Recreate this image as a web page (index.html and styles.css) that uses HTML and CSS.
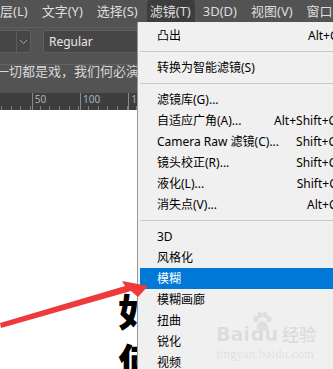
FILE: index.html
```html
<!DOCTYPE html>
<html lang="zh-CN">

<head>
  <meta charset="UTF-8">
  <title>滤镜菜单</title>
  <link rel="stylesheet" href="styles.css">
</head>

<body>
  <div class="app">
    <div class="menubar">
      <span class="menubar-item first">层(L)</span>
      <span class="menubar-item">文字(Y)</span>
      <span class="menubar-item">选择(S)</span>
      <span class="menubar-item active">滤镜(T)</span>
      <span class="menubar-item">3D(D)</span>
      <span class="menubar-item">视图(V)</span>
      <span class="menubar-item">窗口(W)</span>
    </div>

    <div class="options-bar">
      <div class="field font-family">
        <span class="field-value"></span>
        <span class="field-arrow">
          <svg width="9" height="6" viewBox="0 0 9 6"><path d="M1 1l3.5 3.5L8 1" fill="none" stroke="#a8a8a8" stroke-width="1"/></svg>
        </span>
      </div>
      <div class="field font-style">Regular</div>
    </div>

    <div class="doc-tab">一切都是戏，我们何必演</div>

    <div class="ruler">
      <span class="ruler-seg"></span>
      <span class="ruler-seg">50</span>
      <span class="ruler-seg">100</span>
      <span class="ruler-seg">150</span>
    </div>

    <div class="canvas">
      <div class="canvas-text">如<br>何</div>
    </div>
  </div>

  <!-- dropdown for 滤镜 -->
  <div class="dropdown">
    <div class="dd-item"><span>凸出</span><span class="key">Alt+Ctrl+F</span></div>
    <div class="dd-sep"></div>
    <div class="dd-item"><span>转换为智能滤镜(S)</span></div>
    <div class="dd-sep"></div>
    <div class="dd-item"><span>滤镜库(G)...</span></div>
    <div class="dd-item"><span>自适应广角(A)...</span><span class="key">Alt+Shift+Ctrl+A</span></div>
    <div class="dd-item"><span>Camera Raw 滤镜(C)...</span><span class="key">Shift+Ctrl+A</span></div>
    <div class="dd-item"><span>镜头校正(R)...</span><span class="key">Shift+Ctrl+R</span></div>
    <div class="dd-item"><span>液化(L)...</span><span class="key">Shift+Ctrl+X</span></div>
    <div class="dd-item"><span>消失点(V)...</span><span class="key">Alt+Ctrl+V</span></div>
    <div class="dd-sep"></div>
    <div class="dd-item"><span>3D</span></div>
    <div class="dd-item"><span>风格化</span></div>
    <div class="dd-item selected"><span>模糊</span></div>
    <div class="dd-item"><span>模糊画廊</span></div>
    <div class="dd-item"><span>扭曲</span></div>
    <div class="dd-item"><span>锐化</span></div>
    <div class="dd-item"><span>视频</span></div>

    <div class="watermark">
      <div class="wm-logo">
        <span>Bai</span>
        <svg class="wm-paw" width="22" height="20" viewBox="0 0 22 20">
          <ellipse cx="5" cy="7" rx="2.6" ry="3.2" fill="#dedede"/>
          <ellipse cx="9" cy="3" rx="2.4" ry="3" fill="#dedede"/>
          <ellipse cx="14" cy="3" rx="2.4" ry="3" fill="#dedede"/>
          <ellipse cx="18" cy="7" rx="2.6" ry="3.2" fill="#dedede"/>
          <path d="M11.5 9c-3 0-6 4-6 7 0 2 2 3 3.5 3h5c1.5 0 3.5-1 3.5-3 0-3-3-7-6-7z" fill="#dedede"/>
        </svg>
        <span class="wm-du">du</span>
        <span class="wm-cn">经验</span>
      </div>
      <div class="wm-url">jingyan.baidu.com</div>
    </div>
  </div>

  <svg class="arrow" width="333" height="369" viewBox="0 0 333 369">
    <polygon points="0,323 125,286 122,281 148,286 138,297 131,291 1,328" fill="#ee3a3a"/>
  </svg>
</body>

</html>
```

FILE: styles.css
```css
body {
  margin: 0;
  width: 333px;
  height: 369px;
  overflow: hidden;
  position: relative;
  background: #535353;
  font-family: "Noto Sans", "Noto Sans CJK SC", sans-serif;
}

.app {
  display: flex;
  flex-direction: column;
  height: 369px;
}

.app > div {
  flex: none;
}

/* top menu bar */
.menubar {
  display: flex;
  align-items: flex-start;
  height: 27px;
  background: #535353;
  color: #dedede;
  font-size: 13px;
}

.menubar-item {
  height: 22px;
  line-height: 22px;
  padding: 0 7px;
  white-space: nowrap;
}

.menubar-item.first {
  padding-left: 0;
  margin-left: 0;
}

.menubar-item.active {
  background: #3d3d3d;
  border-radius: 3px 3px 0 0;
  padding: 0 4px 0 3px;
  margin: 0 1px 0 2px;
}

/* options bar */
.options-bar {
  height: 34px;
  border-top: 1px solid #5f5f5f;
  display: flex;
  align-items: flex-start;
  padding-top: 2px;
  gap: 10px;
}

.field {
  height: 21px;
  background: #464646;
  border: 1px solid #606060;
  border-radius: 3px;
  color: #e8e8e8;
  font-size: 12px;
  line-height: 21px;
}

.font-family {
  width: 31px;
  margin-left: -2px;
  display: flex;
}

.field-value {
  width: 17px;
  border-right: 1px solid #5c5c5c;
}

.field-arrow {
  flex: 1;
  display: flex;
  align-items: center;
  justify-content: center;
}

.font-style {
  width: 140px;
  padding-left: 5px;
  margin-left: 2px;
}

/* document tab */
.doc-tab {
  height: 19px;
  line-height: 12px;
  border-top: 1px solid #636363;
  background: #535353;
  color: #d8d8d8;
  font-size: 13px;
  white-space: nowrap;
  margin-left: -4px;
  font-family: "Noto Sans CJK SC", sans-serif;
}

/* ruler */
.ruler {
  margin-top: 9px;
  height: 17px;
  background: #3e3e3e;
  background-image: repeating-linear-gradient(90deg, #7a7a7a 0, #7a7a7a 1px, transparent 1px, transparent 9.66px);
  background-size: 100% 4px;
  background-repeat: no-repeat;
  background-position: 1.4px bottom;
  display: flex;
  white-space: nowrap;
}

.ruler-seg {
  flex: none;
  width: 48.3px;
  box-sizing: border-box;
  border-left: 1px solid #8a8a8a;
  color: #a8b0b8;
  font-size: 10px;
  line-height: 13px;
  padding-left: 2px;
}

.ruler-seg:first-child {
  width: 31.7px;
  border-left: none;
}

/* canvas */
.app > .canvas {
  flex: 1;
  min-height: 0;
  overflow: hidden;
  background: #ffffff;
}

.canvas-text {
  padding: 175px 0 0 118px;
  font-family: "Noto Sans CJK SC", sans-serif;
  font-weight: 900;
  font-size: 38px;
  line-height: 50px;
  color: #000;
}

/* dropdown menu */
.dropdown {
  position: absolute;
  left: 137px;
  top: 22px;
  width: 245px;
  height: 360px;
  background: #f0f0f0;
  border-left: 1px solid #979797;
  padding: 3px 0 0 2px;
  font-size: 12px;
  color: #000;
}

.dd-item {
  height: 21px;
  line-height: 21px;
  display: flex;
  padding: 0 22px 0 17px;
  white-space: nowrap;
}

.dd-item .key {
  margin-left: auto;
}

.dd-item.selected {
  background: #0078d7;
  color: #fff;
}

.dd-sep {
  height: 11px;
  display: flex;
  align-items: center;
}

.dd-sep::after {
  content: "";
  flex: 1;
  height: 1px;
  background: #c9c9c9;
}

/* baidu watermark */
.watermark {
  position: absolute;
  left: 78px;
  top: 290px;
  color: #dcdcdc;
  text-shadow: 0 0 1px #fff;
}

.wm-logo {
  display: flex;
  align-items: flex-end;
  font-family: "DejaVu Sans", sans-serif;
  font-weight: bold;
  font-size: 19px;
  line-height: 20px;
}

.wm-paw {
  margin: 0 -22px 12px 1px;
}

.wm-du {
  margin-right: 4px;
}

.wm-cn {
  font-family: "Noto Sans CJK SC", sans-serif;
  font-size: 17px;
}

.wm-url {
  font-family: "Liberation Serif", serif;
  font-size: 12.5px;
  margin-top: 3px;
  letter-spacing: 0.3px;
}

.arrow {
  position: absolute;
  left: 0;
  top: 0;
}
```
